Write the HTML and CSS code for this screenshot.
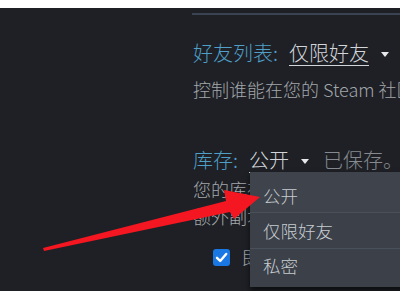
FILE: index.html
```html
<!DOCTYPE html>
<html lang="zh-CN">
<head>
<meta charset="utf-8">
<link rel="stylesheet" href="styles.css">
</head>
<body>
<div class="screen">
  <div class="rule"></div>
  <div class="content">
    <div class="setting">
      <div class="row">
        <span class="label">好友列表:</span>
        <span class="value">仅限好友</span>
        <span class="caret"></span>
      </div>
      <div class="desc">控制谁能在您的 Steam 社区个人资料上看到您的好友列表</div>
    </div>
    <div class="setting second">
      <div class="row">
        <span class="label">库存:</span>
        <span class="value">公开</span>
        <span class="caret"></span>
        <span class="saved">已保存。</span>
      </div>
      <div class="desc tight">您的库存包括您在 Steam 上收到的物品</div>
      <div class="desc tight">额外副本和礼物</div>
      <div class="check-row">
        <span class="checkbox">
          <svg viewBox="0 0 17 17" width="17" height="17"><path d="M4 8.8 L7.2 12 L13.2 5" fill="none" stroke="#fff" stroke-width="2.4" stroke-linecap="round" stroke-linejoin="round"/></svg>
        </span>
        <span class="check-label">即使在好友的库存中也隐藏我的礼物</span>
      </div>
    </div>
  </div>
  <div class="menu">
    <div class="item first">公开</div>
    <div class="item">仅限好友</div>
    <div class="item last">私密</div>
  </div>
</div>
<svg class="arrow" viewBox="0 0 400 300" width="400" height="300">
  <polygon points="43,248 226,201 224,190 260,197 234,219 230,212 44,251" fill="#f41620"/>
</svg>
</body>
</html>
```

FILE: styles.css
```css
html, body {
  margin: 0;
  padding: 0;
  background: #ffffff;
}
body {
  position: relative;
  width: 400px;
  height: 300px;
  overflow: hidden;
  font-family: "Noto Sans CJK SC", "Noto Sans", sans-serif;
  font-weight: 300;
}
.screen {
  position: relative;
  margin-top: 8px;
  height: 283px;
  background: #1e2025;
  overflow: hidden;
}
.rule {
  margin-left: 192px;
  margin-top: 5px;
  height: 2px;
  background: #3a4352;
}
.content {
  padding-left: 193px;
  padding-top: 25px;
  white-space: nowrap;
}
.row {
  display: flex;
  align-items: center;
  height: 26px;
  font-size: 20px;
  line-height: 26px;
}
.label {
  color: #4f9fc8;
}
.value {
  margin-left: 11px;
  color: #d2d6da;
  text-decoration: underline;
  text-decoration-thickness: 1px;
  text-underline-offset: 4px;
}
.caret {
  margin-left: 12px;
  margin-top: 2px;
  width: 0;
  height: 0;
  border-left: 4px solid transparent;
  border-right: 4px solid transparent;
  border-top: 5px solid #e6e8ea;
}
.saved {
  margin-left: 14px;
  color: #858a90;
}
.desc {
  margin-top: 10px;
  font-size: 18px;
  line-height: 26px;
  color: #a2a7ac;
}
.desc.tight {
  margin-top: 0;
  line-height: 27px;
}
.second {
  margin-top: 45px;
}
.second .row + .desc {
  margin-top: 3px;
}
.check-row {
  display: flex;
  align-items: center;
  margin-top: 17px;
  margin-left: 20px;
  font-size: 18px;
  line-height: 20px;
  color: #a2a7ac;
}
.checkbox {
  display: flex;
  width: 17px;
  height: 17px;
  border-radius: 3px;
  background: #1a78e4;
}
.check-label {
  margin-left: 12px;
}
.menu {
  position: absolute;
  left: 250px;
  top: 164px;
  width: 160px;
  height: 115px;
  background: #3b4049;
  box-shadow: 0 4px 6px rgba(0, 0, 0, 0.6);
  font-size: 17.5px;
  color: #c7ccd1;
}
.item {
  height: 35px;
  line-height: 35px;
  padding-left: 13px;
  border-bottom: 1px solid #4a505a;
}
.item.first {
  height: 40px;
  line-height: 48px;
  background: #3e434c;
}
.item.last {
  border-bottom: none;
  height: 38px;
  line-height: 34px;
}
.arrow {
  position: absolute;
  left: 0;
  top: 0;
}
```
